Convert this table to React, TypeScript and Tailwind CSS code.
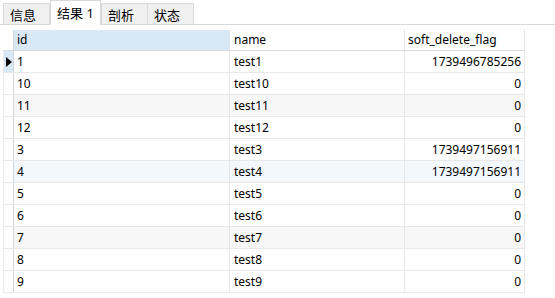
import React from "react";

const rows: { id: string; name: string; flag: string; bg: string }[] = [
  { id: "1", name: "test1", flag: "1739496785256", bg: "bg-white" },
  { id: "10", name: "test10", flag: "0", bg: "bg-white" },
  { id: "11", name: "test11", flag: "0", bg: "bg-[#f7f7f7]" },
  { id: "12", name: "test12", flag: "0", bg: "bg-white" },
  { id: "3", name: "test3", flag: "1739497156911", bg: "bg-white" },
  { id: "4", name: "test4", flag: "1739497156911", bg: "bg-[#f3f8fd]" },
  { id: "5", name: "test5", flag: "0", bg: "bg-white" },
  { id: "6", name: "test6", flag: "0", bg: "bg-white" },
  { id: "7", name: "test7", flag: "0", bg: "bg-[#f7f7f7]" },
  { id: "8", name: "test8", flag: "0", bg: "bg-white" },
  { id: "9", name: "test9", flag: "0", bg: "bg-white" },
];

const Tab = ({ label, active }: { label: string; active?: boolean }) =>
  active ? (
    <div className="h-[25px] w-[51px] -mb-px bg-white border border-b-0 border-[#d9d9d9] pl-[6px] pt-[3px] text-[13px] leading-[18px]">
      {label}
    </div>
  ) : (
    <div className="h-[21px] w-[47px] bg-[#f0f0f0] border border-b-0 border-[#d9d9d9] pl-[6px] pt-[2px] text-[13px] leading-[18px]">
      {label}
    </div>
  );

export default function App() {
  return (
    <div
      className="w-[555px] h-[298px] bg-white text-black overflow-hidden"
      style={{ fontFamily: '"Noto Sans", "Noto Sans CJK SC", sans-serif' }}
    >
      {/* tab strip */}
      <div className="flex items-end h-[25px] border-b border-[#d9d9d9] pl-[3px]">
        <Tab label="信息" />
        <Tab label="结果 1" active />
        <Tab label="剖析" />
        <div className="-ml-px">
          <Tab label="状态" />
        </div>
      </div>

      {/* result grid */}
      <div className="mt-[5px] ml-[3px] w-[522px] text-[12px]">
        <div className="flex h-[21px] border-b border-[#dadada]">
          <div className="w-[11px] border-r border-[#d4d4d4]" />
          <div className="w-[216px] bg-[#d9e8f7] border-r border-[#e4e4e4] pl-[3px] leading-[20px]">id</div>
          <div className="w-[175px] border-r border-[#e4e4e4] pl-[4px] leading-[20px]">name</div>
          <div className="w-[120px] border-r border-[#e4e4e4] pl-[3px] leading-[20px]">soft_delete_flag</div>
        </div>
        {rows.map((r, i) => (
          <div key={r.id} className={`flex h-[22px] border-b border-[#e8e8e8] ${r.bg}`}>
            <div
              className={`w-[11px] border-l border-r border-l-[#ececec] border-r-[#d4d4d4] flex items-center pl-[2px] ${
                i === 0 ? "bg-[#d9e8f7]" : "bg-white"
              }`}
            >
              {i === 0 && (
                <svg width="6" height="10" viewBox="0 0 6 10">
                  <path d="M0 0L6 5L0 10Z" fill="#000" />
                </svg>
              )}
            </div>
            <div className="w-[216px] border-r border-[#e8e8e8] pl-[3px] leading-[21px]">{r.id}</div>
            <div className="w-[175px] border-r border-[#e8e8e8] pl-[4px] leading-[21px]">{r.name}</div>
            <div className="w-[120px] border-r border-[#e8e8e8] pr-[3px] text-right leading-[21px]">{r.flag}</div>
          </div>
        ))}
      </div>
    </div>
  );
}
